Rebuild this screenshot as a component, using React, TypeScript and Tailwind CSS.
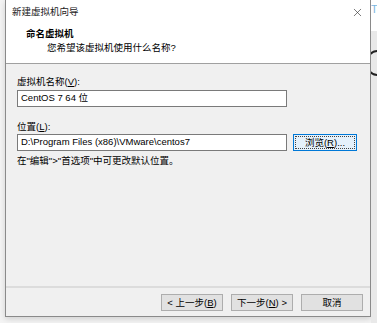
import { X } from 'lucide-react'

const font = { fontFamily: '"Liberation Sans", "Noto Sans CJK SC", sans-serif' }

function WizButton({ children }: { children: React.ReactNode }) {
  return (
    <button className="w-[62px] h-[17px] bg-[#e1e1e1] border border-[#adadad] text-[9.5px] leading-none text-black flex items-center justify-center">
      <span className="whitespace-nowrap">{children}</span>
    </button>
  )
}

export default function App() {
  return (
    <main className="w-[377px] h-[323px] bg-[#f4f4f4] flex overflow-hidden text-[9.5px]" style={font}>
      <div className="w-[5px] shrink-0" />

      <div className="w-[366px] h-[317px] shrink-0 flex flex-col border-l border-r border-b border-[#8a8a8a] shadow-[0_2px_6px_rgba(0,0,0,0.15)]">
        {/* title bar */}
        <div className="h-[24px] bg-white flex items-center justify-between pl-[6px] pr-[6px]">
          <span className="text-[#222]">新建虚拟机向导</span>
          <X size={13} strokeWidth={1.2} className="text-[#333]" />
        </div>

        {/* header */}
        <div className="bg-white pt-[3px] pb-[8px] border-b border-[#a0a0a0]">
          <p className="pl-[20px] leading-[14px] font-bold text-black">命名虚拟机</p>
          <p className="pl-[41px] leading-[14px] text-black">您希望该虚拟机使用什么名称?</p>
        </div>

        {/* body */}
        <div className="flex-1 bg-[#f0f0f0] pl-[11px] pt-[11px]">
          <label className="block leading-[14px] text-black">
            虚拟机名称(<span className="underline">V</span>):
          </label>
          <div className="mt-[1px] w-[270px] h-[17px] bg-white border border-[#7a7a7a] flex items-center pl-[3px] text-black">
            CentOS 7 64 位
          </div>

          <label className="block mt-[13px] leading-[14px] text-black">
            位置(<span className="underline">L</span>):
          </label>
          <div className="flex items-center gap-[6px]">
            <div className="w-[270px] h-[17px] bg-white border border-[#7a7a7a] flex items-center pl-[3px] text-black">
              D:\Program Files (x86)\VMware\centos7
            </div>
            <div className="w-[64px] h-[17px] bg-[#e5f1fb] border border-[#0078d7] p-[1px]">
              <div className="w-full h-full border border-dotted border-[#444] flex items-center justify-center leading-none text-black whitespace-nowrap">
                浏览(<span className="underline">R</span>)...
              </div>
            </div>
          </div>

          <p className="mt-[3px] leading-[14px] text-black">{'在"编辑">"首选项"中可更改默认位置。'}</p>
        </div>

        {/* footer */}
        <div className="bg-[#f0f0f0] border-t-2 border-[#dcdcdc] pt-[6px] pb-[5px] pr-[7px] flex justify-end gap-[8px]">
          <WizButton>
            &lt; 上一步(<span className="underline">B</span>)
          </WizButton>
          <WizButton>
            下一步(<span className="underline">N</span>) &gt;
          </WizButton>
          <WizButton>取消</WizButton>
        </div>
      </div>

      {/* window behind */}
      <div className="flex-1 flex flex-col">
        <div className="h-[31px] bg-white pt-[4px] text-[11px] text-[#7ab6e0] leading-none">T</div>
        <div className="flex-1 bg-[#e9e9e9] pt-[18px]">
          <svg width="6" height="30" viewBox="0 0 6 30">
            <path d="M6 2 A10 12 0 0 0 6 26" fill="none" stroke="#222" strokeWidth="2" />
          </svg>
        </div>
      </div>
    </main>
  )
}
